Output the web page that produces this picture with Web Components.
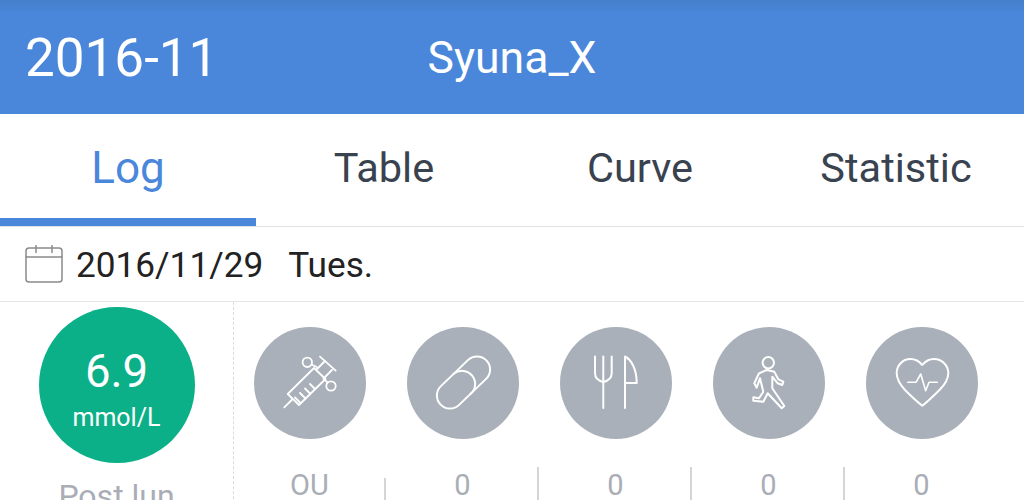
<!DOCTYPE html>
<html>
<head>
<meta charset="utf-8">
<style>
html, body { margin: 0; height: 500px; overflow: hidden; background: #fff; }
body { font-family: Roboto, "Liberation Sans", sans-serif; }
</style>
</head>
<body>
<app-header>
    <span slot="month">2016-11</span>
    <span slot="user">Syuna_X</span>
</app-header>
<tab-bar>
    <tab-item active>Log</tab-item>
    <tab-item>Table</tab-item>
    <tab-item>Curve</tab-item>
    <tab-item>Statistic</tab-item>
</tab-bar>
<date-row>2016/11/29<span style="margin-left:25px">Tues.</span></date-row>
<log-entry>
    <glucose-badge slot="badge" value="6.9" unit="mmol/L" label="Post lun"></glucose-badge>
    <record-item value="OU" first>
        <svg viewBox="0 0 112 112" fill="none" stroke="#fff" stroke-width="1.800" stroke-linecap="round" stroke-linejoin="round">
            <path d="M30.300 80.300L37.700 73"/>
            <path d="M33.700 67L45 78 71.500 52 60 41z"/>
            <path d="M41 70.500l5 5M46 66l5.500 5.500M51 61.500l5 5M56 57l4.500 4.500"/>
            <path d="M63 42l8-8M71 50l7-7"/>
            <path d="M66 29.700l15.700 14"/>
            <circle cx="53.300" cy="35.300" r="4.700"/>
            <path d="M57.500 37.500l5.200 2.500"/>
            <circle cx="77" cy="59" r="4.700"/>
            <path d="M69.300 51.300l4.400 4.400"/>
        </svg>
    </record-item>
    <record-item value="0" short>
        <svg viewBox="0 0 112 112" fill="none" stroke="#fff" stroke-width="2" stroke-linecap="round" stroke-linejoin="round">
            <path d="M33.900 59.100L60.900 33.100A13 13 0 0 1 79.100 51.900L52.100 77.900A13 13 0 0 1 33.900 59.100z"/>
            <path d="M46.700 46.800A13 13 0 0 1 63.300 67.100"/>
        </svg>
    </record-item>
    <record-item value="0">
        <svg viewBox="0 0 112 112" fill="none" stroke="#fff" stroke-width="2" stroke-linecap="round" stroke-linejoin="round">
            <path d="M35 29.500V46c0 5 4 8 8.300 9 4.400-1 8.400-4 8.400-9V29.500"/>
            <path d="M43.300 29.500V81"/>
            <path d="M65 81V29.500c6 3 11.700 12 11.700 26.500H65"/>
        </svg>
    </record-item>
    <record-item value="0">
        <svg viewBox="0 0 112 112" fill="none" stroke="#fff" stroke-width="2" stroke-linecap="round" stroke-linejoin="round">
            <circle cx="55.300" cy="35.700" r="5.700"/>
            <path d="M46 46.300L41.300 56.300 43.700 60.700 47 51.300 50.300 64.700 46 71.300 40.300 70.300 40.300 73.700 50.300 74.700 54.700 66.300 68.700 81.300 71.300 79 59.300 61.300 59.300 49.700 64.700 56.300 69.300 58 70.300 54.700 65.300 52.300 61.300 44.700 53.700 43z"/>
        </svg>
    </record-item>
    <record-item value="0">
        <svg viewBox="0 0 112 112" fill="none" stroke="#fff" stroke-width="2" stroke-linecap="round" stroke-linejoin="round">
            <path d="M56.300 38C53 34 49 32 44.500 32 36.500 32 30.700 38.500 30.700 46 30.700 52 33.500 57 39 63 44 68 50 74 56.300 78.700 62.500 74 68.500 68 73.500 63 79.500 57 82.300 52 82.300 46 82.300 38.500 76 32 68 32 63.500 32 59.500 34 56.300 38z"/>
            <path d="M41.700 55.300H50L54.700 47 59.700 63.700 63 55.300H71.300" stroke-width="1.600"/>
        </svg>
    </record-item>
</log-entry>

<script>
class AppHeader extends HTMLElement {
    constructor() {
        super();
        this.attachShadow({ mode: 'open' });
        this.shadowRoot.innerHTML = `
<style>
:host {
    display: grid;
    grid-template-columns: 1fr auto 1fr;
    align-items: center;
    height: 114px;
    padding: 2px 25px 0;
    box-sizing: border-box;
    color: #fff;
    background: linear-gradient(#437fca 0, #4a87db 14px, #4a87db 100%);
}
.month { font-size: 53px; }
.user { font-size: 44.500px; grid-column: 2; }
</style>
<div class="month"><slot name="month"></slot></div>
<div class="user"><slot name="user"></slot></div>`;
    }
}

class TabBar extends HTMLElement {
    constructor() {
        super();
        this.attachShadow({ mode: 'open' });
        this.shadowRoot.innerHTML = `
<style>
:host {
    display: grid;
    grid-template-columns: repeat(4, 1fr);
    height: 113px;
    box-sizing: border-box;
    border-bottom: 1px solid #dfe1e5;
}
</style>
<slot></slot>`;
    }
}

class TabItem extends HTMLElement {
    constructor() {
        super();
        this.attachShadow({ mode: 'open' });
        this.shadowRoot.innerHTML = `
<style>
:host {
    display: flex;
    align-items: center;
    justify-content: center;
    box-sizing: border-box;
    height: 112px;
    padding-top: 3px;
    font-size: 41.500px;
    color: #39424f;
    border-bottom: 8px solid transparent;
}
:host([active]) {
    font-size: 44px;
    color: #4a87db;
    border-bottom-color: #4a87db;
}
</style>
<slot></slot>`;
    }
}

class DateRow extends HTMLElement {
    constructor() {
        super();
        this.attachShadow({ mode: 'open' });
        this.shadowRoot.innerHTML = `
<style>
:host {
    display: flex;
    align-items: center;
    gap: 13px;
    height: 75px;
    padding-left: 25px;
    box-sizing: border-box;
    border-bottom: 1px solid #e4e5e8;
    font-size: 35.200px;
    color: #222;
}
div { padding-top: 2px; }
svg { width: 38px; height: 38px; flex: none; margin-top: -1px; }
</style>
<svg viewBox="0 0 38 38" fill="none" stroke="#8a8a8a" stroke-width="1.500" stroke-linecap="round" stroke-linejoin="round">
    <rect x="1" y="3" width="36" height="34" rx="3"/>
    <path d="M1 12h36M11 0.500v7M27 0.500v7"/>
</svg>
<div><slot></slot></div>`;
    }
}

class LogEntry extends HTMLElement {
    constructor() {
        super();
        this.attachShadow({ mode: 'open' });
        this.shadowRoot.innerHTML = `
<style>
:host {
    display: grid;
    grid-template-columns: 233px repeat(5, 153px);
    height: 199px;
    overflow: hidden;
}
.badge { border-right: 1px dashed #d9dbdf; margin-right: -1px; }
</style>
<div class="badge"><slot name="badge"></slot></div>
<slot></slot>`;
    }
}

class GlucoseBadge extends HTMLElement {
    constructor() {
        super();
        this.attachShadow({ mode: 'open' });
        const value = this.getAttribute('value');
        const unit = this.getAttribute('unit');
        const label = this.getAttribute('label');
        this.shadowRoot.innerHTML = `
<style>
:host {
    display: flex;
    flex-direction: column;
    align-items: center;
    padding-top: 5px;
}
.circle {
    width: 156px;
    height: 156px;
    border-radius: 50%;
    background: #0bb088;
    color: #fff;
    display: flex;
    flex-direction: column;
    align-items: center;
    justify-content: center;
}
.value { font-size: 45.500px; line-height: 52px; margin-top: 7px; }
.unit { font-size: 25px; line-height: 28px; margin-top: 6px; }
.label { font-size: 32px; line-height: 36px; color: #a9aeb6; margin-top: 15px; white-space: nowrap; }
</style>
<div class="circle"><div class="value">${value}</div><div class="unit">${unit}</div></div>
<div class="label">${label}</div>`;
    }
}

class RecordItem extends HTMLElement {
    constructor() {
        super();
        this.attachShadow({ mode: 'open' });
        const value = this.getAttribute('value');
        this.shadowRoot.innerHTML = `
<style>
:host {
    display: flex;
    flex-direction: column;
    align-items: center;
    padding-top: 25px;
    position: relative;
}
.circle {
    width: 112px;
    height: 112px;
    border-radius: 50%;
    background: #a9b0ba;
    display: flex;
}
::slotted(svg) { width: 112px; height: 112px; }
.value { font-size: 29px; line-height: 32px; color: #a9aeb6; margin-top: 30px; }
:host(:not([first]))::before {
    content: '';
    position: absolute;
    left: -2px;
    top: 165px;
    width: 2px;
    height: 40px;
    background: #d3d5d9;
}
:host([short])::before { top: 176px; }
</style>
<div class="circle"><slot></slot></div>
<div class="value">${value}</div>`;
    }
}

customElements.define('app-header', AppHeader);
customElements.define('tab-bar', TabBar);
customElements.define('tab-item', TabItem);
customElements.define('date-row', DateRow);
customElements.define('log-entry', LogEntry);
customElements.define('glucose-badge', GlucoseBadge);
customElements.define('record-item', RecordItem);
</script>
</body>
</html>
